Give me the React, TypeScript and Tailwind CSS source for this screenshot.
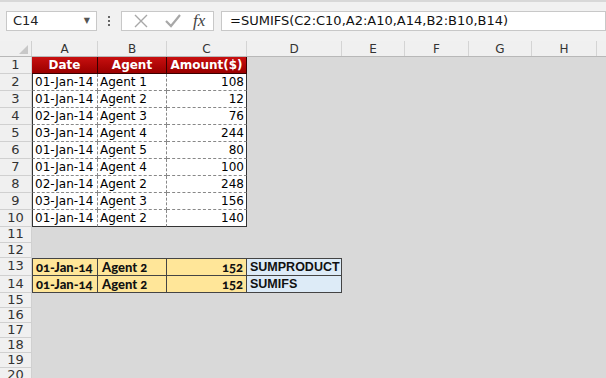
import React from "react";

const cols = ["A", "B", "C", "D", "E", "F", "G", "H"];
const grid = "grid grid-cols-[32px_66px_69px_80px_95px_63px_64px_63px_65px_1fr] grid-rows-[100%] overflow-hidden";

const data = [
  ["01-Jan-14", "Agent 1", "108"],
  ["01-Jan-14", "Agent 2", "12"],
  ["02-Jan-14", "Agent 3", "76"],
  ["03-Jan-14", "Agent 4", "244"],
  ["01-Jan-14", "Agent 5", "80"],
  ["01-Jan-14", "Agent 4", "100"],
  ["02-Jan-14", "Agent 2", "248"],
  ["03-Jan-14", "Agent 3", "156"],
  ["01-Jan-14", "Agent 2", "140"],
];

const RowHead = ({ n }: { n: number }) => (
  <div className="flex items-center justify-center border-b border-r border-[#d0d0d0] bg-[#f0f0f0] text-[13px] font-normal text-[#333]">
    {n}
  </div>
);

const Toolbar = () => (
  <div className="flex h-[41px] items-center border-t-2 border-[#d8d8d8] bg-[#f1f1f1] pb-[2px]">
    <div className="ml-[6px] flex h-[20px] w-[91px] items-center justify-between border border-[#c8c8c8] bg-white pl-[6px] pr-[6px] text-[13px] text-[#222]">
      <span>C14</span>
      <span className="text-[8px] text-[#555]">▼</span>
    </div>
    <div className="ml-[11px] flex flex-col gap-[2px]">
      <span className="h-[2px] w-[2px] bg-[#666]" />
      <span className="h-[2px] w-[2px] bg-[#666]" />
      <span className="h-[2px] w-[2px] bg-[#666]" />
    </div>
    <div className="ml-[11px] flex h-[20px] w-[93px] items-center border border-[#c8c8c8] bg-white">
      <svg width="14" height="14" viewBox="0 0 14 14" className="ml-[12px]">
        <path d="M1 1 L13 13 M13 1 L1 13" stroke="#a8a8a8" strokeWidth="1.4" fill="none" />
      </svg>
      <svg width="16" height="14" viewBox="0 0 16 14" className="ml-[17px]">
        <path d="M1 7 L6 12 L15 1" stroke="#a8a8a8" strokeWidth="2.2" fill="none" />
      </svg>
      <span className="ml-[12px] text-[17px] italic text-[#444] [font-family:'Liberation_Serif',serif]">fx</span>
    </div>
    <div className="ml-[7px] flex h-[20px] flex-1 items-center border border-[#c8c8c8] bg-white pl-[8px] text-[13px] text-[#111]">
      =SUMIFS(C2:C10,A2:A10,A14,B2:B10,B14)
    </div>
  </div>
);

export default function App() {
  return (
    <div className="h-[378px] w-[606px] overflow-hidden bg-[#d9d9d9] leading-[14px] [font-family:'DejaVu_Sans',Verdana,sans-serif]">
      <Toolbar />
      {/* column headers */}
      <div className={`${grid} h-[16px] border-b border-[#b8b8b8] bg-[#f0f0f0] text-[12px] text-[#333]`}>
        <div className="relative border-r border-[#d0d0d0]">
          <svg width="9" height="9" viewBox="0 0 9 9" className="absolute bottom-[2px] right-[3px]">
            <path d="M9 0 L9 9 L0 9 Z" fill="#c8c8c8" />
          </svg>
        </div>
        {cols.map((c) => (
          <div key={c} className="flex items-center justify-center border-r border-[#d4d4d4]">
            {c}
          </div>
        ))}
        <div />
      </div>

      {/* header row */}
      <div className={`${grid} h-[17px]`}>
        <RowHead n={1} />
        {["Date", "Agent", "Amount($)"].map((h) => (
          <div
            key={h}
            className="flex items-center justify-center border-b border-r border-[#3a0000] bg-gradient-to-b from-[#c81010] to-[#9a0000] text-[12px] font-bold text-white"
          >
            {h}
          </div>
        ))}
      </div>

      {data.map((r, i) => {
        const last =
          i === 8
            ? "[border-bottom:1px_solid_#333]"
            : "[border-bottom:1px_dashed_#888]";
        return (
          <div key={i} className={`${grid} h-[17px] text-[12px] text-black`}>
            <RowHead n={i + 2} />
            <div className={`flex items-center bg-white pl-[2px] [border-left:1px_solid_#333] [border-right:1px_dashed_#888] ${last}`}>
              {r[0]}
            </div>
            <div className={`flex items-center bg-white pl-[2px] [border-right:1px_dashed_#888] ${last}`}>
              {r[1]}
            </div>
            <div className={`flex items-center justify-end bg-white pr-[2px] [border-right:1px_solid_#333] ${last}`}>
              {r[2]}
            </div>
          </div>
        );
      })}

      {[11, 12].map((n) => (
        <div key={n} className={`${grid} h-[15.5px]`}>
          <RowHead n={n} />
        </div>
      ))}

      {["SUMPRODUCT", "SUMIFS"].map((label, i) => {
        const top = i === 0 ? "border-t border-t-[#444]" : "";
        const y = `flex items-center border-b border-r border-[#444] bg-[#ffe699] text-[13px] font-black text-[#111] [font-family:Lato,sans-serif] [font-variant-numeric:oldstyle-nums] ${top}`;
        return (
          <div key={label} className={`${grid} h-[17.5px]`}>
            <RowHead n={13 + i} />
            <div className={`${y} border-l pl-[3px]`}>01-Jan-14</div>
            <div className={`${y} pl-[4px]`}>Agent 2</div>
            <div className={`${y} justify-end pr-[3px]`}>152</div>
            <div className={`flex items-center border-b border-r border-[#444] bg-[#ddebf7] pl-[3px] text-[12.5px] font-bold text-[#111] [font-family:'Liberation_Sans',Arial,sans-serif] ${top}`}>
              {label}
            </div>
          </div>
        );
      })}

      {[15, 16, 17, 18, 19, 20].map((n) => (
        <div key={n} className={`${grid} h-[15px]`}>
          <RowHead n={n} />
        </div>
      ))}
    </div>
  );
}
